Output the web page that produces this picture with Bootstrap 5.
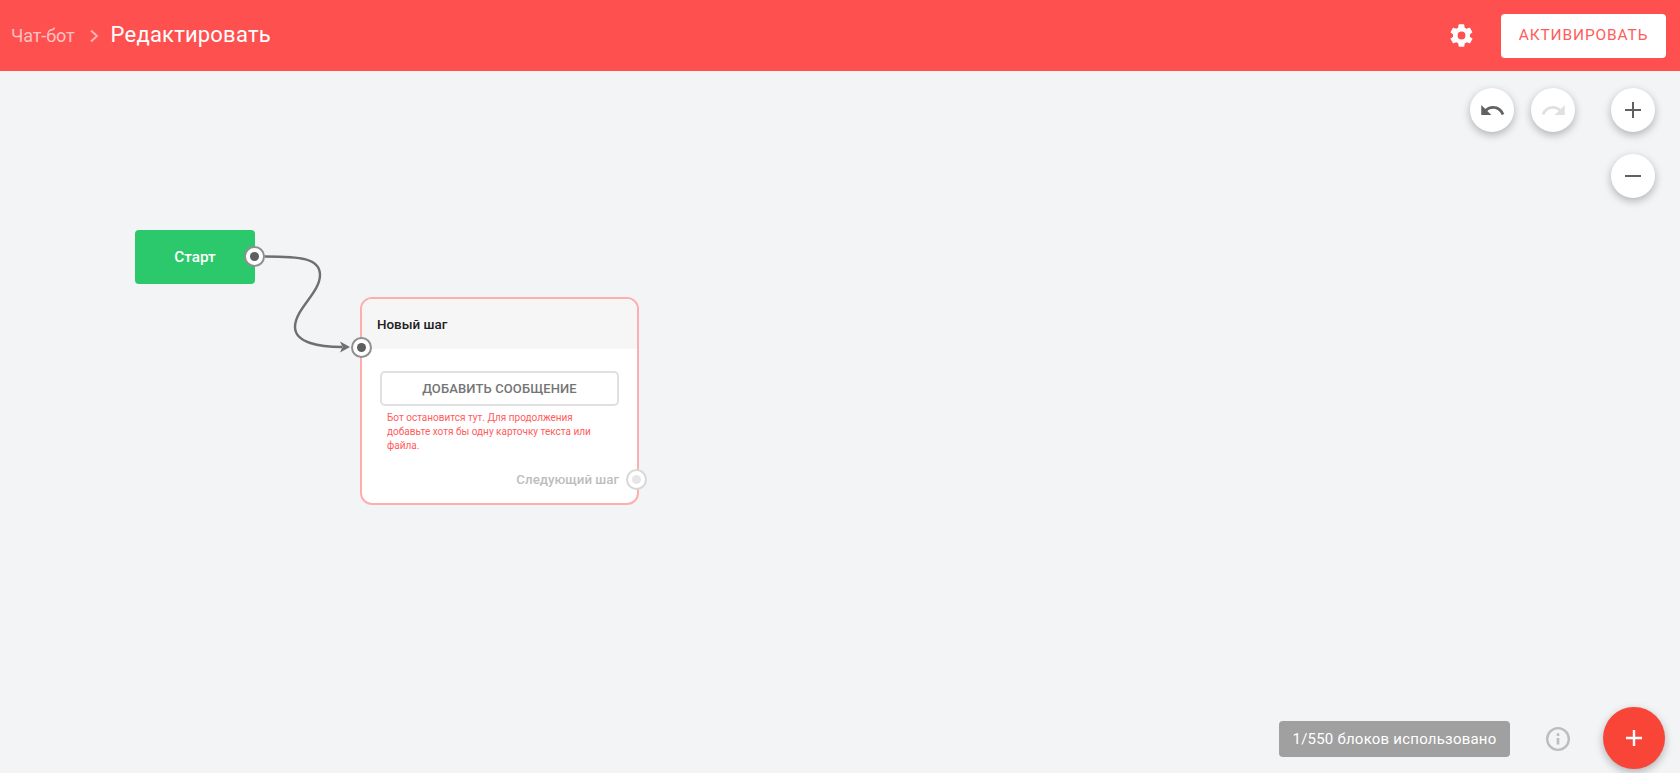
<!doctype html>
<html lang="ru"><head><meta charset="utf-8"><title>Чат-бот</title>
<link href="https://cdn.jsdelivr.net/npm/bootstrap@5.3.0/dist/css/bootstrap.min.css" rel="stylesheet">
<style>
html,body{height:100%;overflow:hidden}
body{font-family:Roboto,"Liberation Sans",sans-serif;background:#f3f4f6;color:#212121}
.topbar{height:71px;background:#ff5050;color:#fff;padding:0 14px 0 11px}
.crumb{font-size:18px;color:#ffc2c2;letter-spacing:-.1px}
.crumb-sep{margin:0 12px 0 14px;display:block}
.page-title{font-size:22px;font-weight:400;margin:0 0 2px;letter-spacing:.2px;line-height:1}
.gear{margin-right:26px;display:block}
.activate{width:165px;height:44px;background:#fff;color:#ff5c5c;border:0;border-radius:4px;font-size:15.5px;letter-spacing:.85px;padding:0}
.activate:hover{background:#fff;color:#ff5c5c}
.canvas{position:relative;height:702px;overflow:hidden}
.tools{position:absolute;top:17px;right:25px;display:flex;gap:16px}
.tools-hist{display:flex;gap:17px;margin-right:20px}
.tools-zoom{display:flex;flex-direction:column;gap:22px}
.round{width:44px;height:44px;border-radius:50%;background:#fff;border:0;padding:0;display:flex;align-items:center;justify-content:center;box-shadow:0 3px 8px rgba(0,0,0,.28)}
.wire{position:absolute;left:0;top:0;width:700px;height:500px;pointer-events:none}
.start-node{position:absolute;left:135px;top:159px;width:120px;height:54px;background:#2bc96c;border-radius:4px;color:#fff;font-size:15.300px;font-weight:500}
.port{position:absolute;width:21px;height:21px;border-radius:50%;background:#fff;border:2px solid #8f8f8f;display:flex;align-items:center;justify-content:center}
.port::after{content:"";width:9px;height:9px;border-radius:50%;background:#5f5f5f}
.port-out{right:-10px;top:16px}
.port-in{left:-11px;top:38px}
.port-next{right:-10px;top:170px;border-color:#d8d8d8}
.port-next::after{background:#e6e6e6}
.step-node{position:absolute;left:360px;top:226px;width:279px;height:208px;background:#fff;border:2px solid #ffaeae;border-radius:12px}
.step-head{height:50px;background:#f6f6f6;border-radius:10px 10px 0 0;padding:2px 0 0 15px;font-size:13.400px;font-weight:500;color:#212121}
.step-body{padding:22px 18px 0 18px}
.add-msg{width:100%;height:35px;background:#fff;border:2px solid #e0e0e0;border-radius:5px;color:#757575;font-size:13px;font-weight:500;padding:0;letter-spacing:.12px}
.add-msg:hover{background:#fff;color:#757575;border-color:#e0e0e0}
.warn{font-size:10px;line-height:14px;color:#ff5c5c;margin:5px 18px 0 7px}
.next-label{position:absolute;right:18px;top:170px;font-size:13.300px;font-weight:500;color:#bdbdbd;line-height:21px}
.footer-tools{position:absolute;right:15px;bottom:4px;display:flex;align-items:center}
.usage{width:231px;height:36px;margin-top:2px;background:#a0a0a0;color:#fff;border-radius:4px;font-size:15px;display:flex;align-items:center;justify-content:center;letter-spacing:.22px}
.info{margin:2px 32px 0 35px;display:block}
.fab{width:62px;height:62px;border-radius:50%;background:#f94438;border:0;padding:0;display:flex;align-items:center;justify-content:center;box-shadow:0 3px 9px rgba(0,0,0,.28)}
</style></head>
<body>
<header class="topbar d-flex align-items-center">
  <span class="crumb">Чат-бот</span>
  <svg class="crumb-sep" width="10" height="14" viewBox="0 0 10 14"><path d="M2 1.500 8 7l-6 5.500" fill="none" stroke="#ffb3b3" stroke-width="2"/></svg>
  <h1 class="page-title">Редактировать</h1>
  <div class="ms-auto d-flex align-items-center">
    <svg class="gear" width="27" height="27" viewBox="0 0 24 24"><path fill="#fff" fill-rule="evenodd" d="M19.4 13c.1-.3.1-.7.1-1s0-.7-.1-1l2.100-1.600c.2-.2.2-.4.1-.6l-2-3.500c-.1-.2-.4-.3-.6-.2l-2.500 1c-.5-.4-1.100-.7-1.700-1l-.4-2.700c0-.2-.2-.4-.5-.4h-4c-.2 0-.4.2-.5.4l-.4 2.700c-.6.2-1.100.6-1.700 1l-2.400-1c-.2-.1-.5 0-.6.2l-2 3.500c-.1.2-.1.4.1.6L4.500 11c0 .3-.1.7-.1 1s0 .7.1 1l-2.100 1.600c-.2.2-.2.4-.1.6l2 3.500c.1.2.4.3.6.2l2.500-1c.5.4 1.100.7 1.700 1l.4 2.700c0 .2.2.4.5.4h4c.3 0 .5-.2.5-.4l.4-2.700c.6-.2 1.100-.6 1.700-1l2.500 1c.2.1.5 0 .6-.2l2-3.500c.1-.2.1-.4-.1-.6L19.400 13zM12 15.500a3.500 3.500 0 1 1 0-7 3.500 3.500 0 0 1 0 7z"/></svg>
    <button class="btn activate" type="button">АКТИВИРОВАТЬ</button>
  </div>
</header>
<main class="canvas">
  <svg class="wire" viewBox="0 0 700 500">
    <path d="M265 185.500C300 185.500 320 187 320 204C320 222 295 238 295 256C295 272 320 276 342 276" fill="none" stroke="#6f6f6f" stroke-width="2.400"/>
    <path d="M340 270.500 350 276 340 281.500 342.500 276z" fill="#6f6f6f"/>
  </svg>
  <div class="start-node d-flex align-items-center justify-content-center">Старт<span class="port port-out"></span></div>
  <section class="step-node">
    <div class="step-head d-flex align-items-center">Новый шаг</div>
    <span class="port port-in"></span>
    <div class="step-body">
      <button class="btn add-msg" type="button">ДОБАВИТЬ СООБЩЕНИЕ</button>
      <p class="warn">Бот остановится тут. Для продолжения добавьте хотя бы одну карточку текста или файла.</p>
    </div>
    <span class="next-label">Следующий шаг</span>
    <span class="port port-next"></span>
  </section>
  <div class="tools">
    <div class="tools-hist">
      <button class="round" type="button" aria-label="undo"><svg width="27" height="27" viewBox="0 0 24 24"><path fill="#616161" d="M12.500 8c-2.650 0-5.050 1-6.900 2.600L2 7v9h9l-3.620-3.620c1.390-1.160 3.160-1.880 5.120-1.880 3.540 0 6.550 2.310 7.600 5.500l2.370-.78C21.080 11.030 17.150 8 12.500 8z"/></svg></button>
      <button class="round" type="button" aria-label="redo"><svg width="27" height="27" viewBox="0 0 24 24"><path fill="#e0e0e0" d="M18.400 10.600C16.550 9 14.150 8 11.500 8c-4.650 0-8.580 3.030-9.960 7.220L3.900 16c1.050-3.190 4.050-5.500 7.600-5.500 1.950 0 3.730.72 5.120 1.880L13 16h9V7l-3.600 3.600z"/></svg></button>
    </div>
    <div class="tools-zoom">
      <button class="round" type="button" aria-label="zoom in"><svg width="18" height="18" viewBox="0 0 18 18"><path d="M9 1v16M1 9h16" stroke="#616161" stroke-width="2" fill="none"/></svg></button>
      <button class="round" type="button" aria-label="zoom out"><svg width="18" height="18" viewBox="0 0 18 18"><path d="M1 9h16" stroke="#616161" stroke-width="2" fill="none"/></svg></button>
    </div>
  </div>
  <div class="footer-tools">
    <div class="usage">1/550 блоков использовано</div>
    <svg class="info" width="26" height="26" viewBox="0 0 24 24"><circle cx="12" cy="12" r="10" fill="none" stroke="#bdbdbd" stroke-width="2.200"/><path fill="#bdbdbd" d="M10.800 11h2.400v6h-2.400zM10.800 6.800h2.400v2.400h-2.400z"/></svg>
    <button class="fab" type="button" aria-label="add"><svg width="18" height="18" viewBox="0 0 18 18"><path d="M9 1v16M1 9h16" stroke="#fff" stroke-width="2.400" fill="none"/></svg></button>
  </div>
</main>
<script src="https://cdn.jsdelivr.net/npm/bootstrap@5.3.0/dist/js/bootstrap.bundle.min.js"></script>
</body></html>
